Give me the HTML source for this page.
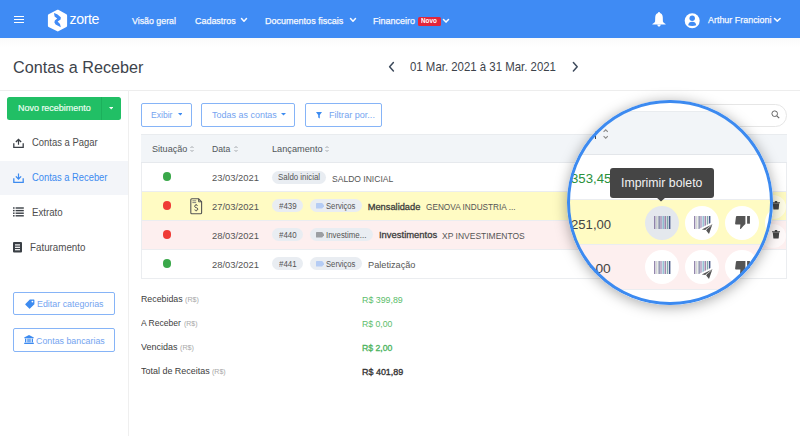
<!DOCTYPE html>
<html><head><meta charset="utf-8"><style>
html,body{margin:0;padding:0;width:800px;height:436px;overflow:hidden;background:#fff;position:relative;font-family:"Liberation Sans",sans-serif;}
.t{position:absolute;white-space:nowrap;line-height:1;}
svg{display:block}
</style></head><body>
<div style="position:absolute;left:0px;top:0px;width:800px;height:38.4px;background:#3f8bf4;"></div>
<div style="position:absolute;left:0px;top:38.4px;width:800px;height:10px;background:linear-gradient(#fafafa,#fff);"></div>
<div style="position:absolute;left:14px;top:15.6px;width:10.2px;height:1.35px;background:#fff;"></div>
<div style="position:absolute;left:14px;top:18.8px;width:10.2px;height:1.35px;background:#fff;"></div>
<div style="position:absolute;left:14px;top:22.0px;width:10.2px;height:1.35px;background:#fff;"></div>
<svg style="position:absolute;left:46px;top:8px" width="24" height="25" viewBox="0 0 24 25">
<path d="M11.3 1.8 Q11.8 1.6 12.3 1.8 L20.4 6.3 Q21.1 6.7 21.1 7.5 L21.1 17.7 Q21.1 18.5 20.4 18.9 L12.3 23.3 Q11.8 23.6 11.3 23.3 L2.6 18.9 Q1.9 18.5 1.9 17.7 L1.9 7.5 Q1.9 6.7 2.6 6.3Z" fill="#fff"/>
<path d="M8.0 5.0 L11.2 6.2 L14.8 9.2 L14.6 11.6 L11.6 13.6 L14.0 16.0 L14.8 19.2 L9.6 16.6 L8.4 14.4 L8.8 12.4 L11.2 10.6 L8.6 8.4Z" fill="#418bf7"/>
</svg>
<div class="t" style="left:69.50px;top:11.98px;font-size:14.2px;color:#fff;letter-spacing:-0.4px;font-weight:300;">zorte</div>
<div class="t" style="left:132.35px;top:16.31px;font-size:9.62px;color:#f7faff;transform:scaleX(0.918);transform-origin:0 0;-webkit-text-stroke:0.25px #f7faff;">Visão geral</div>
<div class="t" style="left:194.55px;top:16.31px;font-size:9.62px;color:#f7faff;transform:scaleX(0.930);transform-origin:0 0;-webkit-text-stroke:0.25px #f7faff;">Cadastros</div>
<svg style="position:absolute;left:240.3px;top:17.2px" width="8" height="5.6" viewBox="-1 -1 8 5.6"><path d="M0.5 0.5 L3.0 3.3000000000000003 L5.5 0.5" fill="none" stroke="#f7faff" stroke-width="1.5" stroke-linecap="round" stroke-linejoin="round"/></svg>
<div class="t" style="left:265.28px;top:16.31px;font-size:9.62px;color:#f7faff;transform:scaleX(0.939);transform-origin:0 0;-webkit-text-stroke:0.25px #f7faff;">Documentos fiscais</div>
<svg style="position:absolute;left:348.5px;top:17.2px" width="8" height="5.6" viewBox="-1 -1 8 5.6"><path d="M0.5 0.5 L3.0 3.3000000000000003 L5.5 0.5" fill="none" stroke="#f7faff" stroke-width="1.5" stroke-linecap="round" stroke-linejoin="round"/></svg>
<div class="t" style="left:373.28px;top:16.31px;font-size:9.62px;color:#f7faff;transform:scaleX(0.937);transform-origin:0 0;-webkit-text-stroke:0.25px #f7faff;">Financeiro</div>
<div style="position:absolute;left:418.4px;top:17px;width:22.2px;height:8.5px;background:#e3263b;border-radius:1.5px;"></div>
<div class="t" style="left:421.39px;top:18.13px;font-size:6.81px;color:#fff;font-weight:700;transform:scaleX(0.930);transform-origin:0 0;">Novo</div>
<svg style="position:absolute;left:441.6px;top:17.5px" width="8" height="5.4" viewBox="-1 -1 8 5.4"><path d="M0.5 0.5 L3.0 3.1 L5.5 0.5" fill="none" stroke="#f7faff" stroke-width="1.5" stroke-linecap="round" stroke-linejoin="round"/></svg>
<svg style="position:absolute;left:652px;top:12.4px" width="14" height="15" viewBox="0 0 14 15">
<circle cx="7" cy="1.2" r="1.1" fill="#fff"/>
<path d="M7 1.0 C4.4 1.0 3.2 3.0 3.2 5.6 L3.1 9.4 Q2.8 10.8 0.4 12.0 L0.4 12.4 L13.6 12.4 L13.6 12.0 Q11.2 10.8 10.9 9.4 L10.8 5.6 C10.8 3.0 9.6 1.0 7 1.0Z" fill="#fff"/>
<path d="M5.2 12.6 Q5.4 14.7 7 14.7 Q8.6 14.7 8.8 12.6Z" fill="#fff"/>
</svg>
<svg style="position:absolute;left:684px;top:12.5px" width="16" height="16" viewBox="0 0 16 16">
<circle cx="8.2" cy="7.7" r="7.5" fill="#fff"/>
<circle cx="8.2" cy="5.3" r="2.7" fill="#3f8bf4"/>
<path d="M4.2 12.2 Q4.6 8.8 8.2 8.8 Q11.8 8.8 12.2 12.2 Q10.4 12.9 8.2 12.9 Q6.0 12.9 4.2 12.2Z" fill="#3f8bf4"/>
</svg>
<div class="t" style="left:707.90px;top:15.16px;font-size:9.62px;color:#f7faff;transform:scaleX(0.929);transform-origin:0 0;-webkit-text-stroke:0.25px #f7faff;">Arthur Francioni</div>
<svg style="position:absolute;left:773.4px;top:17.0px" width="8.6" height="5.4" viewBox="-1 -1 8.6 5.4"><path d="M0.5 0.5 L3.3 3.1 L6.1 0.5" fill="none" stroke="#f7faff" stroke-width="1.5" stroke-linecap="round" stroke-linejoin="round"/></svg>
<div class="t" style="left:12.79px;top:58.97px;font-size:17.40px;color:#3d434b;transform:scaleX(0.930);transform-origin:0 0;">Contas a Receber</div>
<svg style="position:absolute;left:388px;top:61px" width="8" height="12" viewBox="0 0 8 12"><path d="M5.4 1.6 L1.6 5.8 L5.4 10" fill="none" stroke="#3d4a5c" stroke-width="1.5" stroke-linecap="round" stroke-linejoin="round"/></svg><div class="t" style="left:409.85px;top:62.23px;font-size:11.90px;color:#3d434b;transform:scaleX(0.960);transform-origin:0 0;">01 Mar. 2021 à 31 Mar. 2021</div>
<svg style="position:absolute;left:571px;top:61px" width="8" height="12" viewBox="0 0 8 12"><path d="M2.4 1.6 L6.2 5.8 L2.4 10" fill="none" stroke="#3d4a5c" stroke-width="1.5" stroke-linecap="round" stroke-linejoin="round"/></svg><div style="position:absolute;left:0px;top:89.5px;width:800px;height:1px;background:#ededed;"></div>
<div style="position:absolute;left:127.5px;top:90px;width:1.5px;height:346px;background:#efefef;"></div>
<div style="position:absolute;left:7px;top:97.2px;width:114.3px;height:22.6px;background:#21bf65;border-radius:2.5px;"></div>
<div style="position:absolute;left:100.8px;top:97.2px;width:0.8px;height:22.6px;background:#1cb05c;"></div>
<div class="t" style="left:17.78px;top:103.24px;font-size:9.64px;color:#f2fff6;transform:scaleX(0.930);transform-origin:0 0;-webkit-text-stroke:0.15px #f2fff6;">Novo recebimento</div>
<svg style="position:absolute;left:109px;top:107px" width="4.4" height="2.6" viewBox="0 0 4.4 2.6"><path d="M0 0 L4.4 0 L2.2 2.6Z" fill="#f2fff6"/></svg>
<svg style="position:absolute;left:12.5px;top:137.5px" width="11" height="10" viewBox="0 0 11 10">
<path d="M5.5 0.5 L2.4 3.6 L3.3 4.5 L4.9 2.9 L4.9 6.8 L6.1 6.8 L6.1 2.9 L7.7 4.5 L8.6 3.6Z" fill="#3a3f45"/>
<path d="M0.8 5.2 L0.8 9.3 L10.2 9.3 L10.2 5.2" fill="none" stroke="#3a3f45" stroke-width="1.3"/>
</svg>
<div class="t" style="left:31.93px;top:138.48px;font-size:10.30px;color:#4e4e4e;transform:scaleX(0.918);transform-origin:0 0;">Contas a Pagar</div>
<div style="position:absolute;left:0px;top:161.3px;width:127.5px;height:33.6px;background:#f3f5f9;"></div>
<svg style="position:absolute;left:12.5px;top:172.5px" width="11" height="10" viewBox="0 0 11 10">
<path d="M5.5 6.9 L2.4 3.8 L3.3 2.9 L4.9 4.5 L4.9 0.4 L6.1 0.4 L6.1 4.5 L7.7 2.9 L8.6 3.8Z" fill="#3d8bf0"/>
<path d="M0.8 5.2 L0.8 9.3 L10.2 9.3 L10.2 5.2" fill="none" stroke="#3d8bf0" stroke-width="1.3"/>
</svg>
<div class="t" style="left:31.83px;top:173.48px;font-size:10.30px;color:#3d8bf0;transform:scaleX(0.909);transform-origin:0 0;">Contas a Receber</div>
<svg style="position:absolute;left:13px;top:207px" width="11" height="10" viewBox="0 0 11 10">
<g fill="#3a3f45"><rect x="0" y="0.3" width="1.6" height="1.4"/><rect x="0" y="2.9" width="1.6" height="1.4"/><rect x="0" y="5.5" width="1.6" height="1.4"/><rect x="0" y="8.1" width="1.6" height="1.4"/>
<rect x="2.6" y="0.3" width="8.2" height="1.4"/><rect x="2.6" y="2.9" width="8.2" height="1.4"/><rect x="2.6" y="5.5" width="8.2" height="1.4"/><rect x="2.6" y="8.1" width="8.2" height="1.4"/></g>
</svg>
<div class="t" style="left:31.53px;top:208.28px;font-size:10.30px;color:#4e4e4e;transform:scaleX(0.940);transform-origin:0 0;">Extrato</div>
<svg style="position:absolute;left:13px;top:241.5px" width="9" height="11" viewBox="0 0 9 11">
<rect x="0" y="0" width="9" height="10.6" rx="1" fill="#3a3f45"/>
<rect x="2" y="2.3" width="5" height="1.2" fill="#fff"/><rect x="2" y="4.7" width="5" height="1.2" fill="#fff"/><rect x="2" y="7.1" width="5" height="1.2" fill="#fff"/>
</svg>
<div class="t" style="left:30.22px;top:242.88px;font-size:10.30px;color:#4e4e4e;transform:scaleX(0.950);transform-origin:0 0;">Faturamento</div>
<div style="position:absolute;left:13px;top:292.2px;width:101.5px;height:23.3px;box-sizing:border-box;border:1px solid #86b4f7;border-radius:2px;background:#fff;"></div>
<svg style="position:absolute;left:25px;top:299px" width="10" height="10" viewBox="0 0 10 10">
<path d="M4.8 0.6 L9 0.6 Q9.4 0.6 9.4 1 L9.4 5.2 L5 9.6 Q4.6 10 4.2 9.6 L0.4 5.8 Q0 5.4 0.4 5Z" fill="#3d8bf0"/><circle cx="7.4" cy="2.6" r="0.9" fill="#fff"/>
</svg>
<div class="t" style="left:36.69px;top:299.23px;font-size:9.53px;color:#74a4f0;transform:scaleX(0.932);transform-origin:0 0;">Editar categorias</div>
<div style="position:absolute;left:13px;top:328.4px;width:101.5px;height:23.8px;box-sizing:border-box;border:1px solid #86b4f7;border-radius:2px;background:#fff;"></div>
<svg style="position:absolute;left:23.8px;top:335px" width="10" height="9" viewBox="0 0 10 9">
<path d="M5 0 L9.8 2.4 L9.8 3.2 L0.2 3.2 L0.2 2.4Z" fill="#3d8bf0"/>
<rect x="1" y="3.6" width="1.3" height="3.8" fill="#3d8bf0"/><rect x="3.4" y="3.6" width="1.3" height="3.8" fill="#3d8bf0"/><rect x="5.3" y="3.6" width="1.3" height="3.8" fill="#3d8bf0"/><rect x="7.7" y="3.6" width="1.3" height="3.8" fill="#3d8bf0"/>
<rect x="0.2" y="7.7" width="9.6" height="1.3" fill="#3d8bf0"/>
</svg>
<div class="t" style="left:35.56px;top:336.03px;font-size:9.53px;color:#74a4f0;transform:scaleX(0.928);transform-origin:0 0;">Contas bancarias</div>
<div style="position:absolute;left:141.1px;top:103.2px;width:50.8px;height:23.4px;box-sizing:border-box;border:1px solid #86b4f7;border-radius:2px;background:#fff;"></div>
<div class="t" style="left:150.56px;top:110.22px;font-size:9.55px;color:#74a4f0;transform:scaleX(0.898);transform-origin:0 0;">Exibir</div>
<svg style="position:absolute;left:177.8px;top:113.1px" width="4.7" height="2.6" viewBox="0 0 4.7 2.6"><path d="M0 0 L4.7 0 L2.35 2.6Z" fill="#3d8bf0"/></svg>
<div style="position:absolute;left:201.1px;top:103.2px;width:94.4px;height:23.4px;box-sizing:border-box;border:1px solid #86b4f7;border-radius:2px;background:#fff;"></div>
<div class="t" style="left:211.57px;top:110.12px;font-size:9.55px;color:#74a4f0;transform:scaleX(0.940);transform-origin:0 0;">Todas as contas</div>
<svg style="position:absolute;left:281.1px;top:113.1px" width="5" height="2.6" viewBox="0 0 5 2.6"><path d="M0 0 L5 0 L2.5 2.6Z" fill="#3d8bf0"/></svg>
<div style="position:absolute;left:305.3px;top:103.2px;width:77.2px;height:23.6px;box-sizing:border-box;border:1px solid #86b4f7;border-radius:2px;background:#fff;"></div>
<svg style="position:absolute;left:316px;top:111.8px" width="6" height="7" viewBox="0 0 6 7"><path d="M0 0 L6 0 L3.8 3 L3.8 6.6 L2.2 5.6 L2.2 3Z" fill="#3d8bf0"/></svg>
<div class="t" style="left:329.17px;top:110.42px;font-size:9.55px;color:#74a4f0;transform:scaleX(0.951);transform-origin:0 0;">Filtrar por...</div>
<div style="position:absolute;left:640px;top:103.5px;width:146.5px;height:23px;box-sizing:border-box;border:1px solid #e6e6e6;border-radius:12px;background:#fff;"></div>
<svg style="position:absolute;left:770.5px;top:109.5px" width="9" height="9" viewBox="0 0 9 9"><circle cx="3.7" cy="3.7" r="2.8" fill="none" stroke="#666" stroke-width="1.0"/><path d="M5.8 5.8 L8.2 8.2" stroke="#666" stroke-width="1.2"/></svg>
<div style="position:absolute;left:141px;top:134px;width:646px;height:29px;box-sizing:border-box;background:#f2f5f8;border-top:1px solid #e9ecef;border-bottom:1px solid #e6e9ed;"></div>
<div class="t" style="left:152.24px;top:144.45px;font-size:9.75px;color:#51555a;transform:scaleX(0.931);transform-origin:0 0;">Situação</div>
<svg style="position:absolute;left:190.1px;top:145.9px;overflow:visible" width="4" height="6" viewBox="0 0 4 6"><path d="M0.5 2.0 L2 0.5 L3.5 2.0 M0.5 4.0 L2 5.5 L3.5 4.0" fill="none" stroke="#9a9ea3" stroke-width="0.9"/></svg>
<div class="t" style="left:212.31px;top:144.45px;font-size:9.75px;color:#51555a;transform:scaleX(0.887);transform-origin:0 0;">Data</div>
<svg style="position:absolute;left:234.1px;top:145.9px;overflow:visible" width="4" height="6" viewBox="0 0 4 6"><path d="M0.5 2.0 L2 0.5 L3.5 2.0 M0.5 4.0 L2 5.5 L3.5 4.0" fill="none" stroke="#9a9ea3" stroke-width="0.9"/></svg>
<div class="t" style="left:271.57px;top:144.45px;font-size:9.75px;color:#51555a;transform:scaleX(0.942);transform-origin:0 0;">Lançamento</div>
<svg style="position:absolute;left:325px;top:145.9px;overflow:visible" width="4" height="6" viewBox="0 0 4 6"><path d="M0.5 2.0 L2 0.5 L3.5 2.0 M0.5 4.0 L2 5.5 L3.5 4.0" fill="none" stroke="#9a9ea3" stroke-width="0.9"/></svg>
<div style="position:absolute;left:141px;top:163px;width:646px;height:29px;background:#ffffff;box-sizing:border-box;border-bottom:1px solid #ebedf0;"></div>
<div style="position:absolute;left:141px;top:192px;width:646px;height:29px;background:#fffbc3;box-sizing:border-box;border-bottom:1px solid #ebedf0;"></div>
<div style="position:absolute;left:141px;top:221px;width:646px;height:29px;background:#fdefef;box-sizing:border-box;border-bottom:1px solid #ebedf0;"></div>
<div style="position:absolute;left:141px;top:250px;width:646px;height:29px;background:#ffffff;box-sizing:border-box;border-bottom:1px solid #ebedf0;"></div>
<div style="position:absolute;left:141px;top:163px;width:1px;height:116px;background:#ebedf0;"></div>
<div style="position:absolute;left:786px;top:163px;width:1px;height:116px;background:#ebedf0;"></div>
<div style="position:absolute;left:162.5px;top:172.0px;width:8.8px;height:8.8px;background:#3aa84a;border-radius:50%;"></div>
<div class="t" style="left:212.13px;top:173.31px;font-size:9.79px;color:#555;transform:scaleX(0.960);transform-origin:0 0;">23/03/2021</div>
<div style="position:absolute;left:162.5px;top:201.0px;width:8.8px;height:8.8px;background:#ef3b36;border-radius:50%;"></div>
<div class="t" style="left:212.13px;top:202.21px;font-size:9.79px;color:#555;transform:scaleX(0.960);transform-origin:0 0;">27/03/2021</div>
<div style="position:absolute;left:162.5px;top:230.0px;width:8.8px;height:8.8px;background:#ef3b36;border-radius:50%;"></div>
<div class="t" style="left:212.13px;top:231.01px;font-size:9.79px;color:#555;transform:scaleX(0.960);transform-origin:0 0;">28/03/2021</div>
<div style="position:absolute;left:162.5px;top:259.0px;width:8.8px;height:8.8px;background:#3aa84a;border-radius:50%;"></div>
<div class="t" style="left:212.13px;top:259.81px;font-size:9.79px;color:#555;transform:scaleX(0.960);transform-origin:0 0;">28/03/2021</div>
<svg style="position:absolute;left:189.5px;top:197.8px" width="13" height="17" viewBox="0 0 13 17">
<path d="M1.8 0.8 L8.6 0.8 L11.6 3.8 L11.6 14.8 Q11.6 15.8 10.6 15.8 L1.8 15.8 Q0.8 15.8 0.8 14.8 L0.8 1.8 Q0.8 0.8 1.8 0.8Z" fill="none" stroke="#555" stroke-width="1.1"/>
<path d="M8.6 0.8 L8.6 3.8 L11.6 3.8" fill="none" stroke="#555" stroke-width="1"/>
<path d="M2.4 2.8 L6.2 2.8 M2.4 4.6 L6.2 4.6" stroke="#777" stroke-width="0.9"/>
<path d="M7.6 7.6 Q7 7 6.1 7 Q4.6 7 4.6 8.3 Q4.6 9.3 6.2 9.6 Q7.8 9.9 7.8 11.1 Q7.8 12.4 6.2 12.4 Q5.1 12.4 4.5 11.8 M6.2 6.2 L6.2 7 M6.2 12.4 L6.2 13.3" fill="none" stroke="#555" stroke-width="1"/>
</svg>
<div style="position:absolute;left:271.8px;top:170.5px;width:54.5px;height:13px;background:#e9edf2;border-radius:6.5px;"></div>
<div class="t" style="left:278.34px;top:173.35px;font-size:8.45px;color:#555;transform:scaleX(0.935);transform-origin:0 0;">Saldo inicial</div>
<div class="t" style="left:332.02px;top:173.73px;font-size:9.71px;color:#555;transform:scaleX(0.880);transform-origin:0 0;">SALDO INICIAL</div>
<div style="position:absolute;left:271.8px;top:199.4px;width:30.8px;height:13px;background:#e9edf2;border-radius:6.5px;"></div>
<div class="t" style="left:278.90px;top:201.95px;font-size:8.45px;color:#555;transform:scaleX(0.940);transform-origin:0 0;">#439</div>
<div style="position:absolute;left:309.6px;top:199.4px;width:52.5px;height:13px;background:#e9edf2;border-radius:6.5px;"></div>
<svg style="position:absolute;left:315.5px;top:203.20000000000002px" width="8.5" height="5.5" viewBox="0 0 8.5 5.5"><path d="M0.6 0 L6.2 0 L8.4 2.75 L6.2 5.5 L0.6 5.5 Q0 5.5 0 4.9 L0 0.6 Q0 0 0.6 0Z" fill="#b5ccf4"/></svg>
<div class="t" style="left:326.40px;top:201.95px;font-size:8.45px;color:#555;transform:scaleX(0.909);transform-origin:0 0;">Serviços</div>
<div style="position:absolute;left:271.8px;top:228.4px;width:30.8px;height:13px;background:#e9edf2;border-radius:6.5px;"></div>
<div class="t" style="left:278.90px;top:230.75px;font-size:8.45px;color:#555;transform:scaleX(0.936);transform-origin:0 0;">#440</div>
<div style="position:absolute;left:309.6px;top:228.4px;width:63.3px;height:13px;background:#e9edf2;border-radius:6.5px;"></div>
<svg style="position:absolute;left:315.5px;top:232.20000000000002px" width="8.5" height="5.5" viewBox="0 0 8.5 5.5"><path d="M0.6 0 L6.2 0 L8.4 2.75 L6.2 5.5 L0.6 5.5 Q0 5.5 0 4.9 L0 0.6 Q0 0 0.6 0Z" fill="#9c9fa3"/></svg>
<div class="t" style="left:325.69px;top:230.75px;font-size:8.45px;color:#555;transform:scaleX(0.935);transform-origin:0 0;">Investime...</div>
<div style="position:absolute;left:271.8px;top:257.4px;width:30.8px;height:13px;background:#e9edf2;border-radius:6.5px;"></div>
<div class="t" style="left:278.90px;top:259.55px;font-size:8.45px;color:#555;transform:scaleX(0.940);transform-origin:0 0;">#441</div>
<div style="position:absolute;left:309.6px;top:257.4px;width:52.5px;height:13px;background:#e9edf2;border-radius:6.5px;"></div>
<svg style="position:absolute;left:315.5px;top:261.2px" width="8.5" height="5.5" viewBox="0 0 8.5 5.5"><path d="M0.6 0 L6.2 0 L8.4 2.75 L6.2 5.5 L0.6 5.5 Q0 5.5 0 4.9 L0 0.6 Q0 0 0.6 0Z" fill="#b5ccf4"/></svg>
<div class="t" style="left:326.40px;top:259.55px;font-size:8.45px;color:#555;transform:scaleX(0.909);transform-origin:0 0;">Serviços</div>
<div class="t" style="left:367.66px;top:202.63px;font-size:9.30px;color:#3c3c3c;-webkit-text-stroke:0.3px #3c3c3c;">Mensalidade</div>
<div class="t" style="left:426.19px;top:202.57px;font-size:9.37px;color:#555;transform:scaleX(0.880);transform-origin:0 0;">GENOVA INDUSTRIA ...</div>
<div class="t" style="left:378.65px;top:231.43px;font-size:9.30px;color:#3c3c3c;transform:scaleX(1.014);transform-origin:0 0;-webkit-text-stroke:0.3px #3c3c3c;">Investimentos</div>
<div class="t" style="left:442.33px;top:231.12px;font-size:9.67px;color:#555;transform:scaleX(0.880);transform-origin:0 0;">XP INVESTIMENTOS</div>
<div class="t" style="left:367.66px;top:259.72px;font-size:9.90px;color:#555;transform:scaleX(0.930);transform-origin:0 0;">Paletização</div>
<div style="position:absolute;left:760px;top:194.5px;width:26px;height:24px;background:rgba(255,255,255,0.6);border-radius:50%;"></div>
<svg style="position:absolute;left:771.6px;top:201.3px" width="8" height="8.5" viewBox="0 0 8 8.5"><path d="M0 1.2 L8 1.2 L8 2.2 L0 2.2Z M2.8 0 L5.2 0 L5.2 1.2 L2.8 1.2Z M0.8 2.6 L7.2 2.6 L6.7 8 Q6.6 8.5 6.1 8.5 L1.9 8.5 Q1.4 8.5 1.3 8Z" fill="#444"/></svg>
<div style="position:absolute;left:760px;top:223.5px;width:26px;height:24px;background:rgba(255,255,255,0.6);border-radius:50%;"></div>
<svg style="position:absolute;left:771.6px;top:230.3px" width="8" height="8.5" viewBox="0 0 8 8.5"><path d="M0 1.2 L8 1.2 L8 2.2 L0 2.2Z M2.8 0 L5.2 0 L5.2 1.2 L2.8 1.2Z M0.8 2.6 L7.2 2.6 L6.7 8 Q6.6 8.5 6.1 8.5 L1.9 8.5 Q1.4 8.5 1.3 8Z" fill="#444"/></svg>
<div class="t" style="left:140.70px;top:294.36px;font-size:9.50px;color:#3d3d3d;transform:scaleX(0.927);transform-origin:0 0;">Recebidas</div>
<div class="t" style="left:184.57px;top:296.07px;font-size:7.60px;color:#a8a8a8;transform:scaleX(0.944);transform-origin:0 0;">(R$)</div>
<div class="t" style="left:141.40px;top:318.46px;font-size:9.50px;color:#3d3d3d;transform:scaleX(0.898);transform-origin:0 0;">A Receber</div>
<div class="t" style="left:183.88px;top:320.17px;font-size:7.60px;color:#a8a8a8;transform:scaleX(0.915);transform-origin:0 0;">(R$)</div>
<div class="t" style="left:141.40px;top:342.06px;font-size:9.50px;color:#3d3d3d;transform:scaleX(0.944);transform-origin:0 0;">Vencidas</div>
<div class="t" style="left:179.97px;top:343.77px;font-size:7.60px;color:#a8a8a8;transform:scaleX(0.944);transform-origin:0 0;">(R$)</div>
<div class="t" style="left:141.22px;top:366.16px;font-size:9.50px;color:#3d3d3d;transform:scaleX(0.943);transform-origin:0 0;">Total de Receitas</div>
<div class="t" style="left:211.88px;top:367.87px;font-size:7.60px;color:#a8a8a8;transform:scaleX(0.929);transform-origin:0 0;">(R$)</div>
<div class="t" style="left:362.29px;top:295.39px;font-size:9.70px;color:#5cbd6c;transform:scaleX(0.912);transform-origin:0 0;">R$ 399,89</div>
<div class="t" style="left:362.31px;top:319.39px;font-size:9.70px;color:#5cbd6c;transform:scaleX(0.895);transform-origin:0 0;">R$ 0,00</div>
<div class="t" style="left:362.31px;top:343.09px;font-size:9.70px;color:#4db45f;transform:scaleX(0.895);transform-origin:0 0;-webkit-text-stroke:0.35px #4db45f;">R$ 2,00</div>
<div class="t" style="left:362.28px;top:367.09px;font-size:9.70px;color:#333;transform:scaleX(0.923);transform-origin:0 0;-webkit-text-stroke:0.35px #333;">R$ 401,89</div>
<div style="position:absolute;left:567.4000000000001px;top:99.8px;width:205.6px;height:205.6px;border-radius:50%;box-shadow:0 2px 14px rgba(0,0,0,0.35);"></div>
<div style="position:absolute;left:567.4000000000001px;top:99.8px;width:205.6px;height:205.6px;border-radius:50%;overflow:hidden;"><div style="position:absolute;left:-567.4px;top:-99.8px;width:800px;height:500px;background:#fff;"></div>
<div style="position:absolute;left:0.0px;top:11.2px;width:300px;height:44px;background:#f2f5f8;box-sizing:border-box;border-top:1px solid #e9ecef;border-bottom:1px solid #e3e6ea;"></div>
<svg style="position:absolute;left:35.59999999999991px;top:29.200000000000003px" width="5.4" height="10" viewBox="0 0 5.4 10"><path d="M0.6 2.9 L2.7 0.8 L4.8 2.9 M0.6 7.1 L2.7 9.2 L4.8 7.1" fill="none" stroke="#8a8a8a" stroke-width="1.1"/></svg>
<div style="position:absolute;left:27.4px;top:28.2px;width:1.2px;height:10.6px;background:#444;"></div>
<div style="position:absolute;left:0.0px;top:55.2px;width:300px;height:45.5px;background:#ffffff;box-sizing:border-box;border-bottom:1px solid #ebedf0;"></div>
<div style="position:absolute;left:0.0px;top:100.7px;width:300px;height:44.400000000000006px;background:#fffbc3;box-sizing:border-box;border-bottom:1px solid #ebedf0;"></div>
<div style="position:absolute;left:0.0px;top:145.1px;width:300px;height:44.99999999999997px;background:#fdefef;box-sizing:border-box;border-bottom:1px solid #ebedf0;"></div>
<div style="position:absolute;left:0.0px;top:190.1px;width:300px;height:45.10000000000002px;background:#ffffff;box-sizing:border-box;border-bottom:1px solid #ebedf0;"></div>
<div class="t" style="left:3.54px;top:72.39px;font-size:13.60px;color:#2a913b;transform:scaleX(0.969);transform-origin:0 0;">353,45</div>
<div class="t" style="left:3.64px;top:117.89px;font-size:13.60px;color:#444;transform:scaleX(0.965);transform-origin:0 0;">251,00</div>
<div class="t" style="left:17.01px;top:162.59px;font-size:13.60px;color:#444;transform:scaleX(1.012);transform-origin:0 0;">2,00</div>
<div style="position:absolute;left:78.1px;top:105.9px;width:34px;height:34px;background:#e4e8ed;border-radius:50%;"></div>
<div style="position:absolute;left:118.1px;top:105.9px;width:34px;height:34px;background:#ffffff;border-radius:50%;"></div>
<div style="position:absolute;left:158.1px;top:105.9px;width:34px;height:34px;background:#ffffff;border-radius:50%;"></div>
<div style="position:absolute;left:198.1px;top:105.9px;width:34px;height:34px;background:#ffffff;border-radius:50%;"></div>
<svg style="position:absolute;left:86.80px;top:116.30px" width="17" height="13" viewBox="0 0 17 13"><rect x="0.2" y="0" width="1.1" height="13" fill="#7a6a9a"/><rect x="2.4" y="0" width="0.9" height="13" fill="#b8c0b8"/><rect x="4.6" y="0" width="1.0" height="13" fill="#5a5f8a"/><rect x="6.5" y="0" width="1.0" height="13" fill="#8a6aa0"/><rect x="8.6" y="0" width="1.1" height="13" fill="#6aa8c0"/><rect x="10.6" y="0" width="1.2" height="13" fill="#8a6a9a"/><rect x="12.8" y="0" width="1.0" height="13" fill="#6a9a9a"/><rect x="14.8" y="0" width="1.6" height="13" fill="#4a5a8a"/></svg>
<svg style="position:absolute;left:127.00px;top:116.30px;overflow:visible" width="17" height="13" viewBox="0 0 17 13"><rect x="0.2" y="0" width="1.1" height="13" fill="#7a6a9a"/><rect x="2.4" y="0" width="0.9" height="13" fill="#b8c0b8"/><rect x="4.6" y="0" width="1.0" height="13" fill="#5a5f8a"/><rect x="6.5" y="0" width="1.0" height="13" fill="#8a6aa0"/><rect x="8.6" y="0" width="1.1" height="13" fill="#6aa8c0"/><rect x="10.6" y="0" width="1.2" height="13" fill="#8a6a9a"/><rect x="12.8" y="0" width="1.0" height="13" fill="#6a9a9a"/><rect x="14.8" y="0" width="1.6" height="13" fill="#4a5a8a"/><path d="M19.6 7.0 L6.4 13.6 L11.6 14.6 L14.8 19.2Z" fill="#ffffff" stroke="#ffffff" stroke-width="2.6" stroke-linejoin="round"/><path d="M18.4 8.2 L7.8 13.4 L11.6 14.0 L12.6 12.6 L12.8 13.0 L12.2 14.4 L15.0 18.0Z" fill="#555"/><path d="M17.6 9.0 L11.4 14.2" stroke="#ffffff" stroke-width="0.7"/></svg>
<svg style="position:absolute;left:167.60px;top:116.40px" width="16" height="13.5" viewBox="0 0 16 13.5"><path d="M1.8 0 L10.4 0 L10.4 8.0 Q8.4 9.6 6.0 12.8 Q5.2 13.2 5.0 12.4 L5.4 8.6 L1.0 8.6 Q0 8.5 0.1 7.4 L0.9 1.2 Q1.1 0 1.8 0Z" fill="#555"/><rect x="12.1" y="0" width="2.8" height="7.7" fill="#555"/></svg>
<div style="position:absolute;left:78.1px;top:150.6px;width:34px;height:34px;background:#ffffff;border-radius:50%;"></div>
<div style="position:absolute;left:118.1px;top:150.6px;width:34px;height:34px;background:#ffffff;border-radius:50%;"></div>
<div style="position:absolute;left:158.1px;top:150.6px;width:34px;height:34px;background:#ffffff;border-radius:50%;"></div>
<div style="position:absolute;left:198.1px;top:150.6px;width:34px;height:34px;background:#ffffff;border-radius:50%;"></div>
<svg style="position:absolute;left:86.80px;top:161.00px" width="17" height="13" viewBox="0 0 17 13"><rect x="0.2" y="0" width="1.1" height="13" fill="#7a6a9a"/><rect x="2.4" y="0" width="0.9" height="13" fill="#b8c0b8"/><rect x="4.6" y="0" width="1.0" height="13" fill="#5a5f8a"/><rect x="6.5" y="0" width="1.0" height="13" fill="#8a6aa0"/><rect x="8.6" y="0" width="1.1" height="13" fill="#6aa8c0"/><rect x="10.6" y="0" width="1.2" height="13" fill="#8a6a9a"/><rect x="12.8" y="0" width="1.0" height="13" fill="#6a9a9a"/><rect x="14.8" y="0" width="1.6" height="13" fill="#4a5a8a"/></svg>
<svg style="position:absolute;left:127.00px;top:161.00px;overflow:visible" width="17" height="13" viewBox="0 0 17 13"><rect x="0.2" y="0" width="1.1" height="13" fill="#7a6a9a"/><rect x="2.4" y="0" width="0.9" height="13" fill="#b8c0b8"/><rect x="4.6" y="0" width="1.0" height="13" fill="#5a5f8a"/><rect x="6.5" y="0" width="1.0" height="13" fill="#8a6aa0"/><rect x="8.6" y="0" width="1.1" height="13" fill="#6aa8c0"/><rect x="10.6" y="0" width="1.2" height="13" fill="#8a6a9a"/><rect x="12.8" y="0" width="1.0" height="13" fill="#6a9a9a"/><rect x="14.8" y="0" width="1.6" height="13" fill="#4a5a8a"/><path d="M19.6 7.0 L6.4 13.6 L11.6 14.6 L14.8 19.2Z" fill="#ffffff" stroke="#ffffff" stroke-width="2.6" stroke-linejoin="round"/><path d="M18.4 8.2 L7.8 13.4 L11.6 14.0 L12.6 12.6 L12.8 13.0 L12.2 14.4 L15.0 18.0Z" fill="#555"/><path d="M17.6 9.0 L11.4 14.2" stroke="#ffffff" stroke-width="0.7"/></svg>
<svg style="position:absolute;left:167.60px;top:161.10px" width="16" height="13.5" viewBox="0 0 16 13.5"><path d="M1.8 0 L10.4 0 L10.4 8.0 Q8.4 9.6 6.0 12.8 Q5.2 13.2 5.0 12.4 L5.4 8.6 L1.0 8.6 Q0 8.5 0.1 7.4 L0.9 1.2 Q1.1 0 1.8 0Z" fill="#555"/><rect x="12.1" y="0" width="2.8" height="7.7" fill="#555"/></svg>
<div style="position:absolute;left:42.8px;top:68.5px;width:103.5px;height:29.3px;background:#454545;border-radius:3px;"></div>
<svg style="position:absolute;left:88.40px;top:97.70px" width="10" height="5" viewBox="0 0 10 5"><path d="M0 0 L10 0 L5 4.6Z" fill="#454545"/></svg>
<div class="t" style="left:53.69px;top:76.69px;font-size:13.24px;color:#f2f2f2;transform:scaleX(0.930);transform-origin:0 0;">Imprimir boleto</div>
</div>
<div style="position:absolute;left:567.4000000000001px;top:99.8px;width:205.6px;height:205.6px;border-radius:50%;box-sizing:border-box;border:3.2px solid #3c8af0;"></div>

</body></html>
